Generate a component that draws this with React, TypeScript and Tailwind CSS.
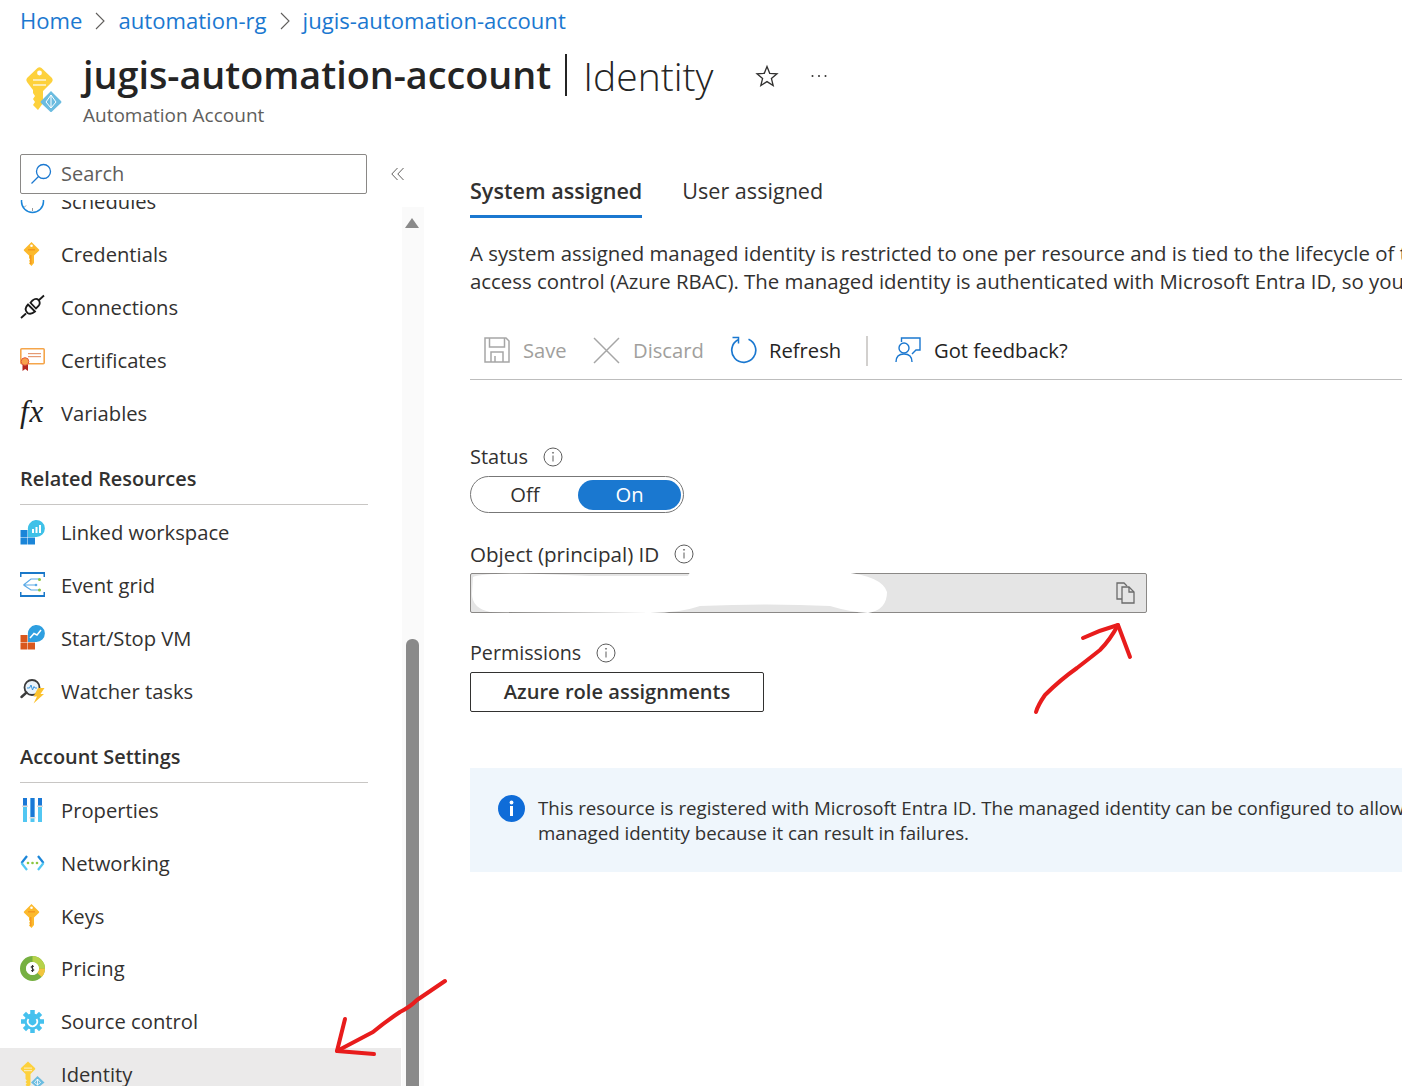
import React from 'react';

const KeyIcon = () => (
  <svg width="25" height="26" viewBox="0 0 25 26">
    <path d="M12.500 1 L20 8.500 Q20.500 9 20 9.700 L15 14.500 V22 L12.500 25 L10 22.500 L11 21 L10 20 L11 18.500 L10 17 V14.500 L5 9.700 Q4.500 9 5 8.500 Z" fill="#fcb92c" />
    <rect x="9" y="8" width="7" height="1.500" fill="#f08c1a" opacity="0.7" />
    <rect x="11" y="14" width="1.500" height="9" fill="#f59a1f" />
    <circle cx="12.500" cy="4.800" r="1.300" fill="#fff" />
  </svg>
);

const PlugIcon = () => (
  <svg width="25" height="26" viewBox="0 0 25 26" fill="none" stroke="#1a1a1a" strokeWidth="1.800">
    <path d="M1 24 L6 19.500" />
    <path d="M18.500 6.500 L24 1.500" />
    <path d="M8 10.500 L15 17.500 Q11 21 7.500 19 Q3.500 15 8 10.500 Z" />
    <path d="M12.500 6.500 Q16 3.500 18.500 6 Q21 9 18.500 12 L16 14.500 L10.500 8.800 Z" />
  </svg>
);

const CertIcon = () => (
  <svg width="25" height="24" viewBox="0 0 25 24">
    <rect x="0.800" y="0.800" width="23.400" height="15" rx="1" fill="#fff" stroke="#f5a54a" strokeWidth="1.600" />
    <rect x="8" y="5" width="13" height="1.200" fill="#e59a73" />
    <rect x="8" y="8" width="13" height="1.200" fill="#e59a73" />
    <path d="M2.500 15 H8 V23 L5.200 21 L2.500 23 Z" fill="#b3261e" />
    <circle cx="5" cy="13.500" r="3.800" fill="#f7a14a" stroke="#e2583e" strokeWidth="1" />
  </svg>
);

const LinkedIcon = () => (
  <svg width="25" height="25" viewBox="0 0 25 25">
    <rect x="0.500" y="10" width="7" height="7" fill="#1b85d8" />
    <rect x="0.500" y="17.500" width="7" height="7" fill="#1b85d8" />
    <rect x="8" y="17.500" width="7" height="7" fill="#1b85d8" />
    <path d="M8 10 A8.500 8.500 0 1 1 16 17 H8 Z" fill="#3fc1e8" />
    <rect x="12" y="9" width="2" height="4" fill="#fff" />
    <rect x="15.500" y="7" width="2" height="6" fill="#fff" />
    <rect x="19" y="5" width="2" height="8" fill="#fff" />
  </svg>
);

const StartStopIcon = () => (
  <svg width="25" height="25" viewBox="0 0 25 25">
    <rect x="0.500" y="10" width="7" height="7" fill="#d9581e" />
    <rect x="0.500" y="17.500" width="7" height="7" fill="#d9581e" />
    <rect x="8" y="17.500" width="7" height="7" fill="#d9581e" />
    <path d="M8 10 A8.500 8.500 0 1 1 16 17 H8 Z" fill="#2e9fe0" />
    <path d="M10 13 L14 8.500 L17 10 L21 5" fill="none" stroke="#fff" strokeWidth="1.500" />
  </svg>
);

const EventGridIcon = () => (
  <svg width="25" height="25" viewBox="0 0 25 25" fill="none">
    <path d="M0.500 5 V1 H24.500 V5 M0.500 20 V24 H24.500 V20" stroke="#1a78c9" strokeWidth="2" />
    <path d="M3.500 13 L11 7 H19 M3.500 13 H16 M3.500 13 L11 18 H19" stroke="#5aa9e6" strokeWidth="1.200" />
    <circle cx="19.500" cy="7.500" r="1.500" fill="#8cc63f" />
    <circle cx="16" cy="13" r="1.300" fill="#5aa9e6" />
    <circle cx="19.500" cy="18" r="1.500" fill="#8cc63f" />
  </svg>
);

const WatcherIcon = () => (
  <svg width="25" height="26" viewBox="0 0 25 26" fill="none">
    <circle cx="12" cy="9.500" r="7.500" fill="#eaf3fb" stroke="#3c3c3c" strokeWidth="1.800" />
    <path d="M6.500 14.500 L1.500 19" stroke="#3c3c3c" strokeWidth="2.400" strokeLinecap="round" />
    <path d="M7 10 H9.500 L11 7 L12.500 12 L14 8.500 L15 10 H17" stroke="#3a96dd" strokeWidth="1" />
    <path d="M18 10 H24.500 L20.500 16 H24 L13.500 25.500 L17 18.500 H13.500 Z" fill="#fcc22e" />
  </svg>
);

const PropertiesIcon = () => (
  <svg width="25" height="26" viewBox="0 0 25 26">
    <rect x="3" y="1" width="4" height="24" fill="#52c7f2" />
    <rect x="10.500" y="1" width="4" height="24" fill="#52c7f2" />
    <rect x="18" y="1" width="4" height="24" fill="#52c7f2" />
    <rect x="3" y="1" width="4" height="8" fill="#1a78d6" />
    <rect x="10.500" y="1" width="4" height="20" fill="#1a78d6" />
    <rect x="18" y="1" width="4" height="8" fill="#1a78d6" />
    <rect x="2" y="8.500" width="6" height="1.500" fill="#dcdcdc" />
    <rect x="9.500" y="20" width="6" height="1.500" fill="#dcdcdc" />
    <rect x="17" y="8.500" width="6" height="1.500" fill="#dcdcdc" />
  </svg>
);

const NetworkIcon = () => (
  <svg width="25" height="18" viewBox="0 0 25 18" fill="none" strokeWidth="2.200">
    <path d="M7 2 L1.500 9" stroke="#1b85d8" />
    <path d="M1.500 9 L7 16" stroke="#52c7f2" />
    <path d="M18 2 L23.500 9" stroke="#1b85d8" />
    <path d="M23.500 9 L18 16" stroke="#52c7f2" />
    <circle cx="8" cy="9" r="1.300" fill="#8cc63f" stroke="none" />
    <circle cx="12.500" cy="9" r="1.300" fill="#8cc63f" stroke="none" />
    <circle cx="17" cy="9" r="1.300" fill="#8cc63f" stroke="none" />
  </svg>
);

const PricingIcon = () => (
  <svg width="25" height="25" viewBox="0 0 25 25" fill="none">
    <circle cx="12.500" cy="12.500" r="9.500" stroke="#76b041" strokeWidth="6" />
    <path d="M12.500 3 A9.500 9.500 0 0 1 22 12.500" stroke="#b6d24a" strokeWidth="6" />
    <path d="M22 12.500 A9.500 9.500 0 0 1 19.500 19" stroke="#f2c53d" strokeWidth="6" />
    <circle cx="12.500" cy="12.500" r="6.500" fill="#fff" />
    <path d="M14 10.500 Q12.500 9.500 11.200 10.500 Q10.800 12 12.500 12.500 Q14.200 13 13.800 14.500 Q12.500 15.500 11 14.500 M12.500 9 V16" stroke="#333" strokeWidth="1" />
  </svg>
);

const GearIcon = () => (
  <svg width="25" height="25" viewBox="0 0 25 25" fill="none">
    <circle cx="12.500" cy="12.500" r="8" fill="#45c1ee" />
    <g stroke="#45c1ee" strokeWidth="4.500">
      <path d="M12.500 1 V24" />
      <path d="M1 12.500 H24" />
      <path d="M4.400 4.400 L20.600 20.600" />
      <path d="M20.600 4.400 L4.400 20.600" />
    </g>
    <path d="M8.500 10 A4.700 4.700 0 1 0 16.500 10" stroke="#fff" strokeWidth="1.800" />
  </svg>
);

const IdentityIcon = () => (
  <svg width="25" height="27" viewBox="0 0 25 27">
    <path d="M8 0.500 L15 7 Q15.500 8 15 8.500 L10.500 13 V24 L8 26 L5.500 24 L6.800 22.500 L5.500 21 L6.800 19.500 L5.500 18 V13 L1 8.500 Q0.500 8 1 7 Z" fill="#fdd13c" />
    <rect x="4" y="6.500" width="8" height="1.200" fill="#fcebb0" />
    <rect x="4" y="9" width="8" height="1.200" fill="#fcebb0" />
    <path d="M17.500 15 L24.500 21.500 L17.500 27 L11 21.500 Z" fill="#6bbce0" />
    <path d="M17.500 18 V24 M14.500 21.500 L17.500 18 L20.500 21.500 L17.500 24 Z" stroke="#fff" strokeWidth="0.800" fill="none" />
  </svg>
);

const ClockIcon = () => (
  <svg width="25" height="25" viewBox="0 0 25 25" fill="none">
    <circle cx="12.500" cy="12.500" r="11" stroke="#1b85d8" strokeWidth="1.500" />
    <path d="M12.500 19 V22 M6 16.500 L4.500 18" stroke="#9a9a9a" strokeWidth="1" />
  </svg>
);

const FxIcon = () => (
  <span className="-mt-[2px] font-['Liberation_Serif',serif] text-[31px] leading-none tracking-[1px] text-[#1f1f1f] italic">fx</span>
);

const InfoDot = () => (
  <svg className="shrink-0" width="20" height="20" viewBox="0 0 20 20" fill="none" stroke="#5c5c5c">
    <circle cx="10" cy="10" r="9" />
    <path d="M10 8.500 V14.500" />
    <circle cx="10" cy="5.800" r="0.500" />
  </svg>
);

interface NavItem {
  label: string;
  icon: React.ReactNode;
  active?: boolean;
}

const NavRow = ({ label, icon, active }: NavItem) => (
  <div className={`mr-[1px] flex h-[52.85px] items-center ${active ? 'bg-[#ebeaea]' : ''}`}>
    <div className="ml-5 flex w-[41px] shrink-0 items-center">{icon}</div>
    <span className="text-[20.2px]">{label}</span>
  </div>
);

const SectionHead = ({ title }: { title: string }) => (
  <div className="mx-5 mb-[1px] mt-[19.5px] flex h-[46px] w-[348px] items-center border-b border-[#c8c6c4] pb-[5px] text-[19.9px] font-semibold">
    {title}
  </div>
);

const Chevron = () => (
  <svg className="mx-[13px]" width="10" height="18" viewBox="0 0 10 18" fill="none" stroke="#605e5c" strokeWidth="1.100">
    <path d="M1 1 L9 9 L1 17" />
  </svg>
);

const FieldLabel = ({ text, labelClass }: { text: string; labelClass: string }) => (
  <div className="flex h-[24px] items-center">
    <span className={labelClass}>{text}</span>
    <InfoDot />
  </div>
);

export default function App() {
  return (
    <div className="relative h-[1086px] w-[1402px] overflow-hidden bg-white font-['Open_Sans',sans-serif] text-[#323130]">
      {/* header */}
      <div className="flex h-[42px] items-center pl-5 text-[22.1px] text-[#1b78d0]">
        <span>Home</span>
        <Chevron />
        <span>automation-rg</span>
        <Chevron />
        <span>jugis-automation-account</span>
      </div>
      <div className="flex h-[112px] pl-5">
        <div className="mt-[24px] shrink-0">
          <svg width="42" height="48" viewBox="0 0 42 48">
            <path d="M17.500 2 Q19.500 0.500 21.500 2 L32 12 Q33.500 14 32 16 L23 25 V37 L18 44 L13 39 L15 36 L13 33 L15 30 L13 27 V24 L7 16 Q5.500 14 7 12 Z" fill="#fdd13c" />
            <rect x="13" y="13" width="13" height="2" fill="#fcebb0" />
            <rect x="13" y="18" width="13" height="2" fill="#fcebb0" />
            <circle cx="19.500" cy="7" r="2.400" fill="#fff" />
            <path d="M31 25 L41 35 Q42 36 41 37 L32 45.500 Q31 46.500 30 45.500 L21 37 Q20 36 21 35 Z" fill="#6bbce0" />
            <path d="M31 29 V42 M26 36 L31 29 L36 36 L31 42 Z" fill="none" stroke="#fff" strokeWidth="1" />
          </svg>
        </div>
        <div className="ml-[21px] flex flex-col">
          <div className="flex h-[66px] items-center text-[37.75px] leading-none text-[#242424]">
            <span className="font-semibold">jugis-automation-account</span>
            <span className="ml-[14px] mr-[16px] h-[42px] w-[2px] bg-[#242424]" />
            <span className="text-[39px] font-light">Identity</span>
            <svg className="ml-[41px] mt-[2px]" width="24" height="24" viewBox="0 0 24 24" fill="none" stroke="#323130" strokeWidth="1.300">
              <path d="M12 2.500 L14.700 9.300 L22 9.800 L16.400 14.400 L18.200 21.500 L12 17.600 L5.800 21.500 L7.600 14.400 L2 9.800 L9.300 9.300 Z" />
            </svg>
            <svg className="ml-[32px] mt-[2px]" width="16" height="4" viewBox="0 0 16 4" fill="#323130">
              <circle cx="1.500" cy="2" r="1" />
              <circle cx="8" cy="2" r="1" />
              <circle cx="14.500" cy="2" r="1" />
            </svg>
          </div>
          <div className="-mt-[7px] text-[19px] text-[#605e5c]">Automation Account</div>
        </div>
      </div>

      <div className="flex">
        {/* sidebar */}
        <div className="flex w-[424px] shrink-0 flex-col">
          <div className="flex h-[40px] items-center pl-5">
            <div className="flex h-[40px] w-[347px] items-center rounded-[2px] border border-[#8a8886] pl-[9px]">
              <svg width="22" height="22" viewBox="0 0 22 22" fill="none" stroke="#1b78d0" strokeWidth="1.300">
                <circle cx="13.500" cy="8.500" r="7" />
                <path d="M8.500 13.500 L1.500 20.500" />
              </svg>
              <span className="ml-[9px] text-[20px] text-[#605e5c]">Search</span>
            </div>
            <svg className="ml-[24px]" width="13" height="14" viewBox="0 0 13 14" fill="none" stroke="#605e5c">
              <path d="M6.500 1 L0.800 7 L6.500 13 M12.500 1 L6.800 7 L12.500 13" />
            </svg>
          </div>
          <div className="mt-[6px] flex h-[886px] overflow-hidden">
            <div className="w-[402px] shrink-0">
              <div className="-mt-[25px]">
                <NavRow label="Schedules" icon={<ClockIcon />} />
                <NavRow label="Credentials" icon={<div className="-ml-[1px]"><KeyIcon /></div>} />
                <NavRow label="Connections" icon={<PlugIcon />} />
                <NavRow label="Certificates" icon={<CertIcon />} />
                <NavRow label="Variables" icon={<FxIcon />} />
                <SectionHead title="Related Resources" />
                <NavRow label="Linked workspace" icon={<LinkedIcon />} />
                <NavRow label="Event grid" icon={<EventGridIcon />} />
                <NavRow label="Start/Stop VM" icon={<StartStopIcon />} />
                <NavRow label="Watcher tasks" icon={<WatcherIcon />} />
                <SectionHead title="Account Settings" />
                <NavRow label="Properties" icon={<PropertiesIcon />} />
                <NavRow label="Networking" icon={<NetworkIcon />} />
                <NavRow label="Keys" icon={<div className="-ml-[1px]"><KeyIcon /></div>} />
                <NavRow label="Pricing" icon={<PricingIcon />} />
                <NavRow label="Source control" icon={<GearIcon />} />
                <NavRow label="Identity" icon={<IdentityIcon />} active />
              </div>
            </div>
            <div className="mt-[7px] flex w-[22px] flex-col items-center bg-[#fafafa] pr-[2px]">
              <div className="mt-[11px] h-0 w-0 border-x-[7px] border-b-[10px] border-x-transparent border-b-[#8a8a8a]" />
              <div className="mt-[411px] h-[460px] w-[13px] rounded-t-[6px] bg-[#8a8a8a]" />
            </div>
          </div>
        </div>

        {/* main */}
        <div className="ml-[46px] min-w-0 flex-1">
          <div className="flex h-[64px] items-end gap-[40px] text-[21.6px]">
            <div className="flex h-[52px] flex-col border-b-[3px] border-[#1b78d0] pt-[9px] font-semibold">
              <span>System assigned</span>
            </div>
            <div className="flex h-[52px] flex-col pt-[9px]">
              <span>User assigned</span>
            </div>
          </div>
          <div className="mt-[21px] text-[20.4px] leading-[28px] whitespace-nowrap">
            <div>A system assigned managed identity is restricted to one per resource and is tied to the lifecycle of this resource.</div>
            <div>access control (Azure RBAC). The managed identity is authenticated with Microsoft Entra ID, so you don't have to store</div>
          </div>
          <div className="mt-[29px] flex h-[56px] items-center border-b border-[#bdbdbd] pb-[2px] pl-[14px] text-[20.2px]">
            <div className="flex w-[109px] items-center text-[#a19f9d]">
              <svg className="mr-[13px] shrink-0" width="26" height="26" viewBox="0 0 26 26" fill="none" stroke="#a6a6a6" strokeWidth="1.500">
                <path d="M1 1 H22 L25 4 V25 H1 Z" />
                <path d="M5.500 1 V10 H20.500 V1" />
                <path d="M7 25 V15 H19 V25" />
                <path d="M11 19 V25" />
              </svg>
              Save
            </div>
            <div className="flex w-[137px] items-center text-[#a19f9d]">
              <svg className="mr-[13px] shrink-0" width="27" height="27" viewBox="0 0 27 27" fill="none" stroke="#a6a6a6" strokeWidth="1.500">
                <path d="M1 1 L26 26 M26 1 L1 26" />
              </svg>
              Discard
            </div>
            <div className="flex w-[136px] items-center text-[#252423]">
              <svg className="mr-[12px] shrink-0" width="27" height="28" viewBox="0 0 27 28" fill="none" stroke="#1b78d0" strokeWidth="1.700">
                <path d="M8 3.800 A12 12 0 1 0 18.500 3.300" />
                <path d="M2.500 1.500 L8.500 1.500 L8.500 7.500" strokeWidth="1.500" />
              </svg>
              Refresh
            </div>
            <div className="mr-[27px] h-[30px] w-[2px] bg-[#d2d0ce]" />
            <div className="flex items-center text-[#252423]">
              <svg className="mr-[13px] shrink-0" width="26" height="26" viewBox="0 0 26 26" fill="none" stroke="#1b78d0" strokeWidth="1.400">
                <path d="M6.500 5 V1 H25 V13 H21 L17 17" />
                <circle cx="9" cy="11" r="5" />
                <path d="M1 25 Q1 17 9 17 Q17 17 17 25" />
              </svg>
              Got feedback?
            </div>
          </div>

          <div className="mt-[65px]">
            <FieldLabel text="Status" labelClass="w-[73px] text-[20px]" />
          </div>
          <div className="mt-[7px] flex h-[37px] w-[214px] items-center rounded-full border border-[#777] pl-[1px] text-[20.2px]">
            <span className="w-[106px] text-center">Off</span>
            <span className="flex h-[30px] w-[103px] items-center justify-center rounded-full bg-[#1a78d0] text-white">On</span>
          </div>

          <div className="mt-[29px]">
            <FieldLabel text="Object (principal) ID" labelClass="w-[204px] text-[20.6px]" />
          </div>
          <div className="mt-[7px] flex h-[40px] w-[677px] items-center justify-end rounded-[2px] border border-[#8a8886] bg-[#e5e5e5] pr-[11px]">
            <svg width="19" height="22" viewBox="0 0 19 22" fill="none" stroke="#6b6b6b" strokeWidth="1.300">
              <path d="M6 17 H1 V1 H8 L11 4" />
              <path d="M6 5 H13 L18 10 V21 H6 Z" />
              <path d="M13 5 V10 H18" />
            </svg>
          </div>

          <div className="mt-[28px]">
            <FieldLabel text="Permissions" labelClass="w-[126px] text-[19.7px]" />
          </div>
          <div className="mt-[7px] flex h-[40px] w-[294px] items-center justify-center rounded-[2px] border border-[#323130] text-[20.1px] font-semibold">
            Azure role assignments
          </div>

          <div className="mt-[56px] flex h-[104px] bg-[#eff6fc] pl-[28px] text-[18.7px] leading-[25px]">
            <svg className="mt-[27px] shrink-0" width="27" height="27" viewBox="0 0 27 27">
              <circle cx="13.500" cy="13.500" r="13.500" fill="#0f6cd8" />
              <rect x="12" y="11" width="3" height="10" fill="#fff" />
              <circle cx="13.500" cy="7.500" r="1.900" fill="#fff" />
            </svg>
            <div className="ml-[13px] mt-[27px] whitespace-nowrap">
              <div>This resource is registered with Microsoft Entra ID. The managed identity can be configured to allow access</div>
              <div>managed identity because it can result in failures.</div>
            </div>
          </div>
        </div>
      </div>

      {/* whiteout + hand-drawn arrows lie over the page */}
      <svg className="pointer-events-none absolute left-0 top-0" width="1402" height="1086" viewBox="0 0 1402 1086" fill="none">
        <path d="M473 577 Q480 573 540 574 L590 576 L688 576 L690 572 L843 572 Q882 576 887 592 Q887 610 868 613 Q850 612 830 606 Q770 603 700 606 Q680 613 650 613 L490 612 Q472 608 472 594 Z" fill="#fff" />
        <g stroke="#e81c1c" strokeWidth="4" strokeLinecap="round" strokeLinejoin="round">
          <path d="M1036 712 Q1038 705 1045 695 Q1060 680 1077 668 Q1090 658 1100 650 Q1110 640 1118 625" />
          <path d="M1083 638 Q1100 630 1118 625 L1130 657" />
          <path d="M445 981 L417 1000 Q410 1007 400 1012 Q385 1022 373 1032 L337 1051" />
          <path d="M345 1019 L337 1051 L374 1054" />
        </g>
      </svg>
    </div>
  );
}
